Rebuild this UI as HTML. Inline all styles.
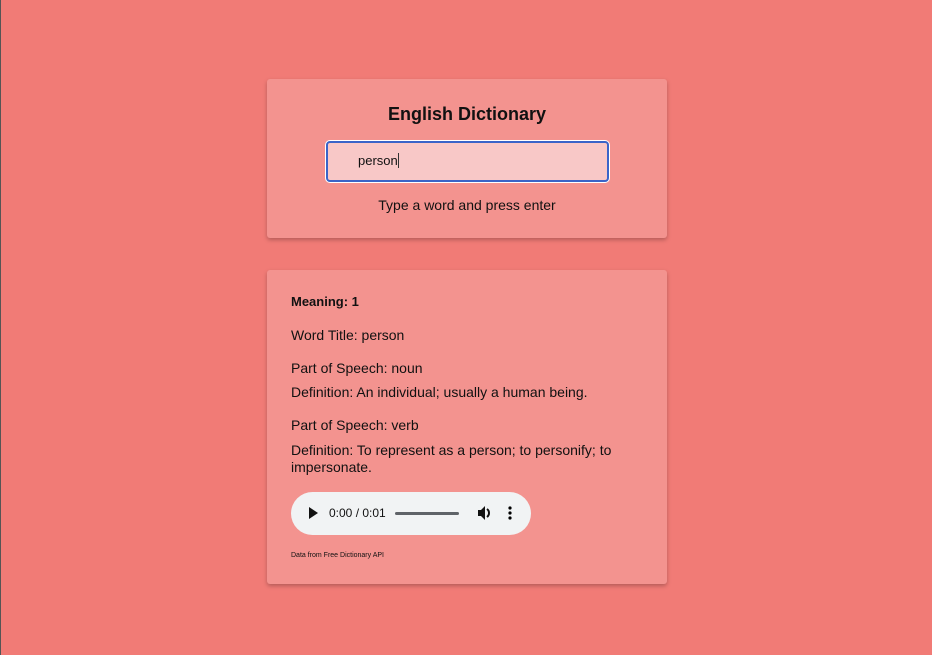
<!DOCTYPE html>
<html><head><style>
html,body{margin:0;padding:0}
body{width:932px;height:655px;background:#f17b76;font-family:"Liberation Sans",sans-serif;color:#111;position:relative;overflow:hidden}
.card{position:absolute;left:267px;width:400px;background:#f3938f;border-radius:3px;box-shadow:0 2px 4px rgba(0,0,0,.25)}
.t{position:absolute;white-space:nowrap}
</style></head><body>
<div style="position:absolute;left:0;top:0;width:1px;height:655px;background:#555"></div>
<div class="card" style="top:79px;height:159px">
 <div class="t" style="left:0;width:400px;text-align:center;top:25px;font-size:18px;font-weight:600">English Dictionary</div>
 <div style="position:absolute;left:59px;top:62px;width:279px;height:37px;background:#f8c8c7;border:2px solid #3a64c8;border-radius:4px;box-shadow:0 0 0 1px #fff"></div>
 <div class="t" style="left:91px;top:74px;font-size:13px">person<span style="display:inline-block;width:1px;height:15px;background:#333;vertical-align:-3px"></span></div>
 <div class="t" style="left:0;width:400px;text-align:center;top:118px;font-size:14px">Type a word and press enter</div>
</div>
<div class="card" style="top:270px;height:314px">
 <div class="t" style="left:24px;top:24px;font-size:13px;font-weight:bold">Meaning: 1</div>
 <div class="t" style="left:24px;top:57px;font-size:14px">Word Title: person</div>
 <div class="t" style="left:24px;top:90px;font-size:14px">Part of Speech: noun</div>
 <div class="t" style="left:24px;top:114px;font-size:14px">Definition: An individual; usually a human being.</div>
 <div class="t" style="left:24px;top:147px;font-size:14px">Part of Speech: verb</div>
 <div class="t" style="left:24px;top:172px;font-size:14px;line-height:17px">Definition: To represent as a person; to personify; to<br>impersonate.</div>
 <div style="position:absolute;left:24px;top:222px;width:240px;height:43px;background:#f1f3f4;border-radius:22px">
  <svg style="position:absolute;left:17px;top:15px" width="10" height="12"><path d="M1 0L10 6L1 12Z" fill="#111"/></svg>
  <div class="t" style="left:38px;top:14px;font-size:12px">0:00 / 0:01</div>
  <div style="position:absolute;left:104px;top:20px;width:64px;height:3px;background:#5f6368;border-radius:2px"></div>
  <svg style="position:absolute;left:187px;top:14px" width="14" height="14"><path d="M0 4h3l4-4v14l-4-4H0Z" fill="#111"/><path d="M9 3a5 5 0 0 1 0 8" stroke="#111" stroke-width="2" fill="none"/></svg>
  <svg style="position:absolute;left:217px;top:14px" width="4" height="14"><circle cx="2" cy="2" r="1.6"/><circle cx="2" cy="7" r="1.6"/><circle cx="2" cy="12" r="1.6"/></svg>
 </div>
 <div class="t" style="left:24px;top:282px;font-size:7px">Data from Free Dictionary API</div>
</div>
</body></html>
